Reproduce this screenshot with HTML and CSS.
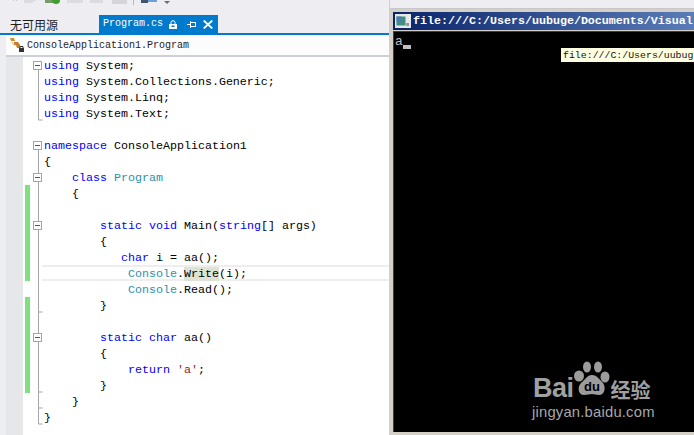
FILE: index.html
```html
<!DOCTYPE html>
<html lang="zh">
<head>
<meta charset="utf-8">
<title>Program.cs</title>
<link rel="stylesheet" href="styles.css">
</head>
<body>
<div class="ide">
  <div class="toolbar">
    <svg class="tool-icons" width="180" height="14" viewBox="0 0 180 14">
      <path d="M13 0h1v1h-1zM16 0h1v1h-1z" fill="#c8c8cc"/>
      <path d="M24 0h9v3h-9zM33 0h3v1h-3z" fill="#dcdce0"/>
      <rect x="45" y="0" width="9" height="3" fill="#7d9a6a"/>
      <circle cx="56" cy="0" r="4" fill="#3f9e2f"/>
      <rect x="67" y="0" width="16" height="3" fill="#dcdce0"/>
      <rect x="90" y="0" width="13" height="3" fill="#dcdce0"/>
      <rect x="112" y="0" width="15" height="4" fill="#d6d6da"/>
      <rect x="133" y="0" width="1" height="5" fill="#b8b8c0"/>
      <path d="M141 0h7v3h-7z" fill="#44546a"/>
      <rect x="148" y="0" width="9" height="2" fill="#6f9fd8"/>
      <path d="M164 1h6l-3 3z" fill="#6a6a70"/>
    </svg>
  </div>
  <div class="tabs">
    <span class="no-source">无可用源</span>
    <div class="tab">
      <span class="tab-name">Program.cs</span>
      <svg class="tab-icon icon-lock" width="8" height="9" viewBox="0 0 8 9"><path d="M2 4V2.500a2 1.800 0 0 1 4 0V4" fill="none" stroke="#fff"/><path d="M0 4h8v5H0zM2.500 5.500v1.500h3V5.500z" fill="#fff" fill-rule="evenodd"/></svg>
      <svg class="tab-icon icon-pin" width="9" height="7" viewBox="0 0 9 7"><path d="M0 3.500h3M3.500 0v7M3.500 1.500H8.500M3.500 5.500H8.500M8.500 1v5" fill="none" stroke="#fff"/></svg>
      <svg class="tab-icon" width="10" height="9" viewBox="0 0 10 9"><path d="M.7.500l8.600 8M9.300.500l-8.600 8" stroke="#fff" stroke-width="1.800"/></svg>
    </div>
  </div>
  <div class="body-row">
    <div class="nav-spacer"></div>
    <div class="doc">
      <div class="navbar">
        <svg class="class-icon" width="16" height="16" viewBox="0 0 16 16">
          <path d="M1 1h4l1 3h-4z" fill="#d98c2b"/>
          <path d="M5 5h4l2 3v3h-3l-1-3h-2z" fill="#c47e24"/>
          <path d="M3 5l2 3h2" fill="none" stroke="#e3b070"/>
          <rect x="10" y="11" width="5" height="4" fill="#333"/>
          <path d="M11 11V9.500h3V11" fill="none" stroke="#333"/>
        </svg>
        <span class="nav-label">ConsoleApplication1.Program</span>
      </div>
      <div class="editor">
        <div class="gutter">
          <div class="changes">
            <i class="change change-a"></i>
            <i class="change change-b"></i>
          </div>
          <svg class="folds" width="16" height="378" viewBox="0 0 16 378">
            <g fill="none" stroke="#a5a5a5">
              <path d="M6.500 9v54h4"/>
              <path d="M6.500 89v278h4"/>
              <path d="M6.500 121v230h4"/>
              <path d="M6.500 169v86h4"/>
              <path d="M6.500 281v54h4"/>
            </g>
            <g fill="#fff" stroke="#a5a5a5">
              <rect x="1.500" y="4.500" width="8" height="8"/>
              <rect x="1.500" y="84.500" width="8" height="8"/>
              <rect x="1.500" y="116.500" width="8" height="8"/>
              <rect x="1.500" y="164.500" width="8" height="8"/>
              <rect x="1.500" y="276.500" width="8" height="8"/>
            </g>
            <path d="M3 8.500h5M3 88.500h5M3 120.500h5M3 168.500h5M3 280.500h5" stroke="#555"/>
          </svg>
        </div>
        <div class="code">
          <div class="ln"><b>using</b> System;</div>
          <div class="ln"><b>using</b> System.Collections.Generic;</div>
          <div class="ln"><b>using</b> System.Linq;</div>
          <div class="ln"><b>using</b> System.Text;</div>
          <div class="ln"> </div>
          <div class="ln"><b>namespace</b> ConsoleApplication1</div>
          <div class="ln">{</div>
          <div class="ln">    <b>class</b> <em>Program</em></div>
          <div class="ln">    {</div>
          <div class="ln"> </div>
          <div class="ln">        <b>static</b> <b>void</b> Main(<b>string</b>[] args)</div>
          <div class="ln">        {</div>
          <div class="ln">           <b>char</b> i = aa();</div>
          <div class="ln current">            <em>Console</em>.<mark>Write</mark>(i);</div>
          <div class="ln">            <em>Console</em>.Read();</div>
          <div class="ln">        }</div>
          <div class="ln"> </div>
          <div class="ln">        <b>static</b> <b>char</b> aa()</div>
          <div class="ln">        {</div>
          <div class="ln">            <b>return</b> <u>'a'</u>;</div>
          <div class="ln">        }</div>
          <div class="ln">    }</div>
          <div class="ln">}</div>
        </div>
      </div>
    </div>
  </div>
</div>
<div class="desktop">
  <div class="console">
    <div class="titlebar">
      <svg class="app-icon" width="16" height="14" viewBox="0 0 16 14">
        <rect width="16" height="14" fill="#e8e8e8"/>
        <rect x="1.500" y="2.500" width="9" height="9" fill="#3f8f83"/>
        <rect x="1.500" y="2.500" width="5" height="5" fill="#4f7fa8"/>
        <rect x="11" y="9" width="3" height="3" fill="#9a9a9a"/>
      </svg>
      <span class="title-text">file:///C:/Users/uubuge/Documents/Visual</span>
    </div>
    <div class="screen">
      <div class="output">a<span class="cursor"></span></div>
      <div class="tooltip">file:///C:/Users/uubug</div>
      <div class="watermark">
        <div class="wm-top">
          <span class="wm-bai">Bai</span>
          <svg class="wm-paw" width="36" height="37" viewBox="0 0 36 37">
            <g fill="#9c9c9c">
              <ellipse cx="5" cy="15" rx="5" ry="5.500"/>
              <ellipse cx="13" cy="6" rx="4" ry="5.500"/>
              <ellipse cx="24" cy="6" rx="4" ry="5.500"/>
              <ellipse cx="31" cy="16" rx="4.500" ry="5.500"/>
              <path d="M18 14c5 0 8 5 11 8 3 4 2 12-4 12-3 0-5-1-7-1s-5 1-8 1c-6 0-7-8-3-12 4-3 6-8 11-8z"/>
            </g>
            <text class="wm-du" x="18" y="30" text-anchor="middle">du</text>
          </svg>
          <span class="wm-cn">经验</span>
        </div>
        <div class="wm-url">jingyan.baidu.com</div>
      </div>
    </div>
  </div>
</div>
</body>
</html>
```
FILE: styles.css
```css
html, body {
  margin: 0;
  height: 100%;
}
body {
  display: flex;
  width: 694px;
  height: 435px;
  overflow: hidden;
  background: #eeeef2;
  font-family: "Liberation Mono", "Noto Sans CJK SC", monospace;
}
.ide {
  width: 389px;
  flex: none;
  display: flex;
  flex-direction: column;
}
.toolbar {
  height: 15px;
  flex: none;
}
.tool-icons {
  display: block;
}
.tabs {
  height: 18px;
  flex: none;
  display: flex;
  border-bottom: 2px solid #007acc;
}
.no-source {
  width: 89px;
  padding-left: 10px;
  font: 12px/20px "Noto Sans CJK SC", sans-serif;
  color: #1e1e1e;
}
.tab {
  width: 119px;
  box-sizing: border-box;
  padding-left: 4px;
  display: flex;
  align-items: center;
  background: #007acc;
  color: #fff;
}
.tab-name {
  width: 66px;
  flex: none;
  font-size: 10px;
  line-height: 18px;
}
.tab-icon {
  flex: none;
}
.icon-lock {
  margin-right: 10px;
}
.icon-pin {
  margin-right: 7px;
}
.body-row {
  flex: 1;
  display: flex;
  min-height: 0;
}
.nav-spacer {
  width: 6px;
  flex: none;
}
.doc {
  flex: 1;
  display: flex;
  flex-direction: column;
  min-width: 0;
}
.navbar {
  height: 20px;
  flex: none;
  display: flex;
  align-items: center;
  background: #fcfcfd;
  border-bottom: 2px solid #ccd0dd;
}
.class-icon {
  margin: 0 2px 0 3px;
  flex: none;
}
.nav-label {
  font-size: 10px;
  color: #1e1e1e;
}
.editor {
  flex: 1;
  display: flex;
  min-height: 0;
  background: #fff;
}
.gutter {
  width: 36px;
  flex: none;
  display: flex;
  background: linear-gradient(90deg, #e6e7e8 17px, #fff 17px);
}
.changes {
  width: 7px;
  margin-left: 19px;
  flex: none;
  display: flex;
  flex-direction: column;
  padding-top: 128px;
}
.change {
  display: block;
  width: 5px;
  background: #7ee07e;
}
.change-a {
  height: 96px;
  margin-bottom: 16px;
}
.change-b {
  height: 96px;
}
.folds {
  display: block;
  flex: none;
  margin-right: -12px;
}
.code {
  flex: 1;
  min-width: 0;
  padding-left: 2px;
  font-size: 11.670px;
  color: #000;
}
.ln {
  height: 16px;
  line-height: 18px;
  white-space: pre;
}
.code b {
  font-weight: normal;
  color: #0000ff;
}
.code em {
  font-style: normal;
  color: #2b91af;
}
.code u {
  text-decoration: none;
  color: #a31515;
}
.code mark {
  background: #dfe3d4;
  color: inherit;
}
.current {
  margin-left: -2px;
  padding-left: 2px;
  box-shadow: inset 0 2px 0 #eeeeee, inset 0 -2px 0 #eeeeee;
}
.desktop {
  flex: 1;
  min-width: 0;
  padding-top: 8px;
  border-left: 1px solid #d0d0d0;
  box-sizing: border-box;
  display: flex;
}
.console {
  flex: 1;
  min-width: 0;
  display: flex;
  flex-direction: column;
  background: #d4d0c8;
  padding: 3px 0 3px 3px;
  border-top: 1px solid #c8c8c8;
}
.titlebar {
  height: 18px;
  flex: none;
  display: flex;
  align-items: center;
  gap: 2px;
  padding-left: 2px;
  background: linear-gradient(90deg, #0a246a, #5a7cb8);
  color: #fff;
}
.app-icon {
  flex: none;
}
.title-text {
  font: bold 11.670px "Liberation Mono", monospace;
  white-space: nowrap;
}
.screen {
  flex: 1;
  position: relative;
  margin-top: 1px;
  border-top: 1px solid #404040;
  border-left: 1px solid #404040;
  background: #000;
  overflow: hidden;
  color: #c0c0c0;
}
.output {
  padding: 3px 0 0 1px;
  font-size: 13px;
  line-height: 14px;
  display: flex;
  align-items: flex-end;
}
.cursor {
  display: block;
  width: 8px;
  height: 4px;
  background: #c0c0c0;
}
.tooltip {
  position: absolute;
  left: 167px;
  top: 16px;
  width: 131px;
  height: 14px;
  padding-left: 2px;
  background: #ffffe1;
  color: #111;
  font-size: 9.900px;
  line-height: 15px;
  white-space: nowrap;
}
.watermark {
  position: absolute;
  left: 139px;
  top: 329px;
  color: #a0a0a0;
  font-family: "Liberation Sans", sans-serif;
}
.wm-top {
  display: flex;
  align-items: flex-end;
  height: 37px;
}
.wm-bai {
  font-size: 27px;
  font-weight: bold;
  line-height: 30px;
  letter-spacing: -0.500px;
  margin-bottom: -5px;
}
.wm-paw {
  margin: 0 1px 0 0;
  flex: none;
}
.wm-du {
  font: bold 13px "Liberation Sans", sans-serif;
  fill: #000;
}
.wm-cn {
  font: bold 20px/28px "Noto Sans CJK SC", sans-serif;
  margin-bottom: -6px;
}
.wm-url {
  margin-top: 5px;
  margin-left: -1px;
  font-size: 14.800px;
  line-height: 18px;
  letter-spacing: 0.200px;
  color: #a8a8a8;
  white-space: nowrap;
}
```
